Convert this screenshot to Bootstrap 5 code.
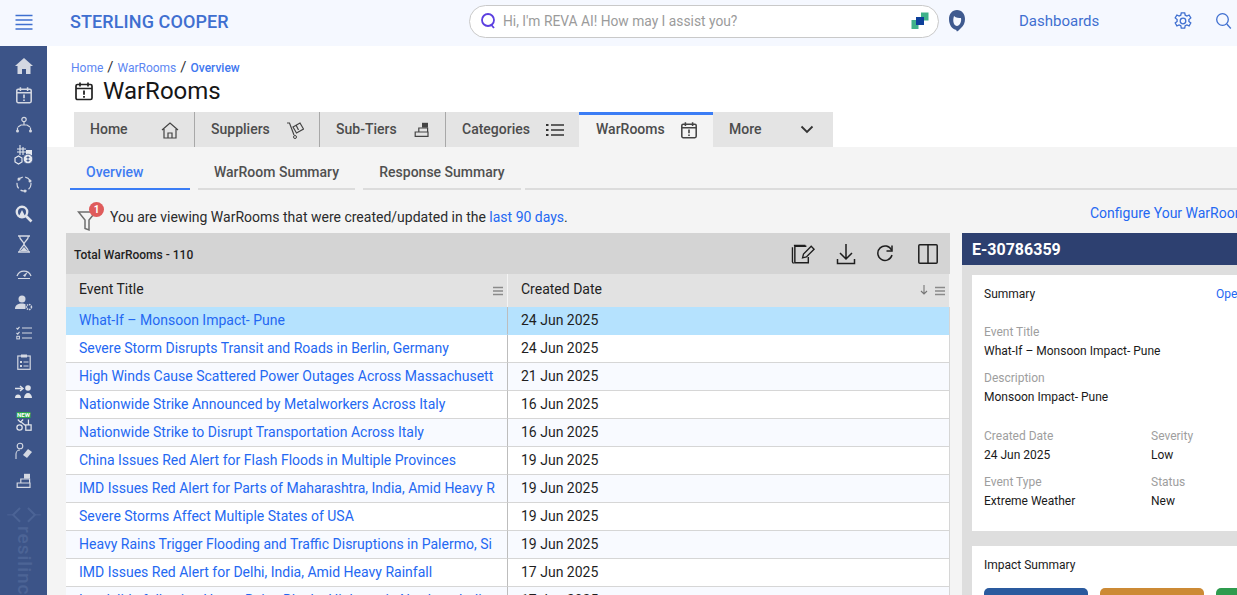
<!DOCTYPE html>
<html lang="en">
<head>
    <meta charset="UTF-8">
    <title>WarRooms</title>
    <link href="https://cdn.jsdelivr.net/npm/bootstrap@5.3.0/dist/css/bootstrap.min.css" rel="stylesheet">
    <style>
        html, body { height: 595px; overflow: hidden; }
        body { font-family: Roboto, "Liberation Sans", sans-serif; background: #f4f4f4; color: #1a1a1a; }
        a { text-decoration: none; color: #2468f2; }

        .app-top { height: 46px; background: #f5f8ff; width: 1237px; padding-bottom: 4px; }
        .burger { width: 47px; flex: none; padding-top: 2px; }
        .brand-name { width: 422px; padding-left: 23px; flex: none; font-size: 18px; font-weight: 500; color: #3f6fd0; letter-spacing: .1px; }
        .reva-box { width: 470px; height: 33px; flex: none; border: 1px solid #c9c9c9; border-radius: 17px; background: #fff; padding: 0 9px 0 10px; }
        .reva-text { font-size: 13.8px; color: #9b9b9b; margin-left: -2px; }
        .dash-link { font-size: 15px; color: #3f6fd0; margin-left: 52px; width: 154px; }

        .side-bar { width: 47px; height: 549px; flex: none; background: #3c5488; padding-top: 5px; overflow: hidden; }
        .side-item { height: 30.1px; }
        .side-logo { margin-top: 10px; }
        .side-mark { writing-mode: vertical-rl; font-size: 19px; font-weight: 500; color: #4c6496; margin-top: 2px; letter-spacing: 1px; }

        .page-main { width: 1190px; flex: none; overflow: hidden; }
        .page-head { background: #fff; height: 101px; padding: 14px 0 0 24px; }
        .crumbs { font-size: 12px; line-height: 14px; color: #333; }
        .crumbs a { color: #5c86f2; }
        .crumbs b { font-weight: 500; color: #3f78f0; }
        .crumbs i { font-style: normal; font-size: 15px; margin: 0 1px; }
        .title-row { margin: 2px 0 0 3px; }
        .title-row svg { margin-right: 9px; }
        .page-title { font-size: 24px; line-height: 28px; font-weight: 400; color: #161616; margin: 0; }
        .main-tabs { margin-top: 7px; margin-left: 3px; height: 35px; }
        .main-tab { height: 35px; background: #e4e4e4; color: #4c4c4c; font-size: 14px; font-weight: 500; padding: 0 15px 0 16px; border-right: 1px solid #a8a8a8; flex: none; }
        .main-tab.on { background: #f4f4f4; border-top: 3px solid #3b7df5; border-right: 0; padding: 0 15px 3px 17px; }
        .main-tab.tail { border-right: 0; }

        .sub-tabs { height: 43px; padding: 11px 0 0 23px; gap: 8px; }
        .sub-tab { height: 32px; border-bottom: 2px solid #dcdcdc; font-size: 14px; font-weight: 500; color: #505050; text-align: center; padding-top: 4px; flex: none; }
        .sub-tab.on { color: #3f7cf2; border-bottom-color: #3b7df5; }
        .sub-tab.rest { margin-left: -4px; flex-grow: 1; }
        .notice-row { height: 43px; padding: 12px 0 0 30px; font-size: 14px; color: #2b2b2b; width: 1190px; }
        .filter-wrap { position: relative; width: 26px; height: 26px; margin-right: 7px; flex: none; }
        .filter-count { position: absolute; top: -3px; right: -1px; width: 15px; height: 15px; border-radius: 50%; background: #df5b5b; color: #fff; font-size: 10px; font-weight: 700; line-height: 15px; text-align: center; }
        .config-link { margin-left: auto; font-size: 14px; white-space: nowrap; margin-top: -8px; margin-right: -10px; }

        .work-row { padding-left: 19px; gap: 12px; width: 1300px; }
        .grid-wrap { width: 884px; flex: none; }
        .grid-bar { height: 41px; background: #d4d4d4; padding: 0 12px 0 8px; font-size: 12px; font-weight: 500; color: #1f1f1f; }
        .grid-bar > span { padding-top: 2px; }
        .grid-tools { gap: 20px; }
        .war-grid { width: 884px; table-layout: fixed; margin: 0; font-size: 14px; border-collapse: separate; border-spacing: 0; }
        .war-grid th { height: 33px; background: #e2e2e2; font-weight: 400; font-size: 14px; color: #222; padding: 0 5px 2px 13px; position: relative; border-right: 1px solid #f4f4f4; }
        .war-grid td { height: 28px; padding: 0 13px; white-space: nowrap; overflow: hidden; background: #fff; border-bottom: 1px solid #d6d6d6; color: #1f1f1f; }
        .war-grid td:first-child { border-right: 1px solid #bdbdbd; }
        .war-grid td:last-child { border-right: 1px solid #d6d6d6; }
        .war-grid tr.alt td { background: #f8faff; }
        .war-grid tr.picked td { background: #b5e2fe; border-bottom-color: #b5e2fe; }
        .th-menu { position: absolute; right: 3px; top: 12px; }
        .th-sort { position: absolute; right: 20px; top: 10px; }

        .detail-wrap { width: 330px; flex: none; background: #dedede; height: 362px; }
        .detail-head { height: 32px; background: #2d4070; color: #fff; font-size: 16px; font-weight: 700; padding: 0 10px; line-height: 34px; }
        .detail-card { background: #fff; margin: 10px 0 15px 10px; padding: 10px 12px 12px; font-size: 12px; color: #1a1a1a; }
        .detail-card a { font-size: 12px; }
        .detail-card.top-card { height: 256px; }
        .sum-title { width: 232px; flex: none; }
        .fld-label { color: #9e9e9e; line-height: 14px; }
        .fld-value { line-height: 14px; margin-top: 5px; }
        .fld-col { width: 167px; flex: none; }
        .tile-row { gap: 12px; margin-top: 14px; }
        .impact-tile { width: 104px; height: 40px; border-radius: 5px; flex: none; }
    </style>
</head>
<body>

<svg width="0" height="0" class="position-absolute">
    <symbol id="cal-alert" viewBox="0 0 20 20">
        <rect x="2" y="3.5" width="16" height="15" rx="1.5" fill="none" stroke="currentColor" stroke-width="1.7"/>
        <path d="M2 7.5h16M6 1.5v4M14 1.5v4" fill="none" stroke="currentColor" stroke-width="1.7"/>
        <path d="M10 9.5v4.2M10 14.900v1.800" fill="none" stroke="currentColor" stroke-width="1.8"/>
    </symbol>
    <symbol id="stairs" viewBox="0 0 20 20">
        <rect x="10" y="1" width="7.500" height="6" fill="currentColor"/>
        <path d="M6 7.500h11v5H6zM1.500 12.500h16v5.500h-16z" fill="none" stroke="currentColor" stroke-width="1.500"/>
    </symbol>
    <symbol id="lines-3" viewBox="0 0 12 10">
        <path d="M1 1.500h10M1 5h10M1 8.500h10" stroke="#8a8a8a" stroke-width="1.400"/>
    </symbol>
</svg>

<div class="app-top d-flex align-items-center">
    <div class="burger d-flex justify-content-center">
        <svg width="20" height="16" viewBox="0 0 20 16"><path d="M1.500 1.500h17M1.500 6h17M1.500 10.500h17M1.500 15h17" stroke="#3f6fd0" stroke-width="1.400"/></svg>
    </div>
    <div class="brand-name">STERLING COOPER</div>
    <div class="reva-box d-flex align-items-center">
        <svg width="17" height="18" viewBox="0 0 17 18" class="me-2"><circle cx="8" cy="8" r="6" fill="none" stroke="#5b3fe0" stroke-width="1.800"/><path d="M11 12.500l3 3.500" stroke="#5b3fe0" stroke-width="1.800"/></svg>
        <span class="reva-text flex-grow-1">Hi, I'm REVA AI! How may I assist you?</span>
        <svg width="18" height="18" viewBox="0 0 18 18"><rect x="0.500" y="8" width="7" height="9" fill="#3fb28a"/><rect x="10" y="0.500" width="7.500" height="8" fill="#3fb28a"/><rect x="5" y="5" width="8" height="8" fill="#0d3f9a"/></svg>
    </div>
    <svg width="20" height="24" viewBox="0 0 20 24" class="ms-2 flex-none"><path d="M10 1c5 0 8 4 8 9 0 4-1.500 7-4 9l-3 3c-1 .6-2 0-1.500-1C5 20 2 16 2 10c0-5 3-9 8-9z" fill="#3f5a8f"/><path d="M7 7c2 2 5 2 7 2 .8 4-1.500 8-4 8s-5-4-3-10z" fill="#f5f8ff"/></svg>
    <a class="dash-link" href="#">Dashboards</a>
    <svg width="20" height="20" viewBox="0 0 20 20" class="flex-none"><circle cx="10" cy="10" r="2.800" fill="none" stroke="#3f6fd0" stroke-width="1.300"/><path d="M8.300 1.800h3.400l.5 2.400 1.700.8 2.200-1 1.700 2.900-1.900 1.600v1.900l1.900 1.600-1.700 2.900-2.200-1-1.700.8-.5 2.400H8.300l-.5-2.400-1.700-.8-2.200 1-1.700-2.900 1.900-1.600V8.500L2.200 6.900l1.700-2.900 2.200 1 1.700-.8z" fill="none" stroke="#3f6fd0" stroke-width="1.300"/></svg>
    <svg width="18" height="18" viewBox="0 0 18 18" class="flex-none" style="margin-left:22px"><circle cx="7.500" cy="7.500" r="5.800" fill="none" stroke="#3f6fd0" stroke-width="1.300"/><path d="M11.800 12l4 4.500" stroke="#3f6fd0" stroke-width="1.300"/></svg>
</div>

<div class="d-flex">
    <div class="side-bar d-flex flex-column align-items-center">
        <div class="side-item d-flex align-items-center"><svg width="18" height="16" viewBox="0 0 18 16"><path d="M9 0L0 8h2.500v8H7v-5h4v5h4.500V8H18z" fill="#d4d8e2"/></svg></div>
        <div class="side-item d-flex align-items-center"><svg width="18" height="18" style="color:#d4d8e2"><use href="#cal-alert"/></svg></div>
        <div class="side-item d-flex align-items-center"><svg width="18" height="18" viewBox="0 0 18 18"><circle cx="9" cy="3.500" r="2.200" fill="none" stroke="#d4d8e2" stroke-width="1.200"/><path d="M9 6v3M3 11l3-2h6l3 2M2.500 11.500v3M15.500 11.500v3" fill="none" stroke="#d4d8e2" stroke-width="1.200"/><circle cx="2.500" cy="15" r="1.500" fill="#d4d8e2"/><circle cx="15.500" cy="15" r="1.500" fill="#d4d8e2"/></svg></div>
        <div class="side-item d-flex align-items-center"><svg width="20" height="20" viewBox="0 0 20 20"><path d="M6 0v10M9 2v8M3 4h9M3 7h9" stroke="#e6e9f0" stroke-width="1.100"/><path d="M12 5h6v5h-6z" fill="#e6e9f0"/><path d="M1 13l3.500-2 3.500 2v4l-3.500 2L1 17z" fill="none" stroke="#e6e9f0" stroke-width="1.200"/><circle cx="14" cy="14" r="4.800" fill="#e6e9f0" stroke="#3c5488" stroke-width=".8"/><path d="M14 11v6M12.500 12.500h3M12.500 15.500h3" stroke="#3c5488" stroke-width=".9"/></svg></div>
        <div class="side-item d-flex align-items-center"><svg width="18" height="18" viewBox="0 0 18 18"><circle cx="9" cy="9" r="7" fill="none" stroke="#d4d8e2" stroke-width="1.200" stroke-dasharray="6 2.500"/><circle cx="4" cy="4" r="1.500" fill="#d4d8e2"/><circle cx="15" cy="6" r="1.500" fill="#d4d8e2"/><circle cx="10" cy="16" r="1.500" fill="#d4d8e2"/></svg></div>
        <div class="side-item d-flex align-items-center"><svg width="18" height="18" viewBox="0 0 18 18"><circle cx="7" cy="7" r="5.200" fill="none" stroke="#e0e3ea" stroke-width="2.400"/><path d="M11 11l5.500 5.500" stroke="#e0e3ea" stroke-width="2.600"/><path d="M7 5l3 6H4z" fill="#e0e3ea"/></svg></div>
        <div class="side-item d-flex align-items-center"><svg width="14" height="18" viewBox="0 0 14 18"><path d="M1 1h12M1 17h12M2.500 1c0 4 4.500 5.500 4.500 8 0-2.500 4.500-4 4.500-8M2.500 17c0-4 4.500-5.500 4.500-8 0 2.500 4.500 4 4.500 8z" fill="none" stroke="#d4d8e2" stroke-width="1.300"/><path d="M3.500 16L7 12l3.500 4z" fill="#d4d8e2"/></svg></div>
        <div class="side-item d-flex align-items-center"><svg width="18" height="14" viewBox="0 0 18 14"><path d="M2 10a7.500 7.500 0 0 1 14 0" fill="none" stroke="#d4d8e2" stroke-width="1.300"/><path d="M8 9.500l5-4-3 5.500z" fill="#d4d8e2"/><path d="M3 12.500h12" stroke="#d4d8e2"/></svg></div>
        <div class="side-item d-flex align-items-center"><svg width="18" height="16" viewBox="0 0 18 16"><circle cx="7" cy="4" r="3.500" fill="#d4d8e2"/><path d="M0 14c0-4 3-5.500 7-5.500 1.500 0 2.500.2 3.500.7V14z" fill="#d4d8e2"/><circle cx="14" cy="12" r="2.500" fill="none" stroke="#d4d8e2" stroke-width="1.500" stroke-dasharray="1.500 .8"/></svg></div>
        <div class="side-item d-flex align-items-center"><svg width="16" height="14" viewBox="0 0 16 14"><path d="M.5 2l1.200 1.200L3.500.8M.5 7l1.200 1.200L3.500 5.800M6 2h10M6 7h10M6 12h10" fill="none" stroke="#d4d8e2" stroke-width="1.100"/><rect x=".8" y="10.300" width="2.600" height="2.600" fill="none" stroke="#d4d8e2"/></svg></div>
        <div class="side-item d-flex align-items-center"><svg width="14" height="16" viewBox="0 0 14 16"><rect x=".8" y="2" width="12.400" height="13.300" fill="none" stroke="#d4d8e2" stroke-width="1.200"/><rect x="4" y=".5" width="6" height="3" fill="#d4d8e2"/><path d="M3 7h2v2H3zM3 11h2v2H3z" fill="#d4d8e2"/><path d="M6.500 8h5M6.500 12h5" stroke="#d4d8e2"/></svg></div>
        <div class="side-item d-flex align-items-center"><svg width="18" height="14" viewBox="0 0 18 14"><path d="M0 3.500h8M5 1l3 2.500L5 6" fill="none" stroke="#e0e3ea" stroke-width="1.400"/><circle cx="13" cy="3" r="2.800" fill="#e0e3ea"/><path d="M9 13c0-3 2-5 4-5s4 2 4 5zM0 13c0-2 1-3.500 3-3.500S6 11 6 13z" fill="#e0e3ea"/></svg></div>
        <div class="side-item d-flex align-items-center position-relative">
            <svg width="16" height="16" viewBox="0 0 18 18" class="mt-1"><circle cx="4" cy="13" r="3" fill="none" stroke="#e0e3ea" stroke-width="1.400"/><rect x="11" y="10" width="6" height="6" fill="none" stroke="#e0e3ea" stroke-width="1.400"/><path d="M2 4l3 3 3-3M6 7l5 4M14 4v6" fill="none" stroke="#e0e3ea" stroke-width="1.400"/></svg>
            <span class="position-absolute start-50 translate-middle-x" style="top:5px;background:#2ea84f;color:#fff;font-size:6px;font-weight:700;line-height:6px;padding:0 1px;">NEW</span>
        </div>
        <div class="side-item d-flex align-items-center"><svg width="18" height="18" viewBox="0 0 18 18"><circle cx="5" cy="4" r="2.800" fill="none" stroke="#d4d8e2" stroke-width="1.100"/><path d="M1 17v-5c0-2 1.500-4 4-4" fill="none" stroke="#d4d8e2" stroke-width="1.100"/><path d="M8 13l5-6 4 3-5 6z" fill="#d4d8e2"/></svg></div>
        <div class="side-item d-flex align-items-center"><svg width="16" height="16" style="color:#d4d8e2"><use href="#stairs"/></svg></div>
        <svg class="side-logo flex-none" width="34" height="18" viewBox="0 0 34 18"><path d="M13 2L6 9l7 7M21 2l7 7-7 7" fill="none" stroke="#4c6496" stroke-width="2"/><path d="M0 9h6M28 9h6" stroke="#4c6496"/></svg>
        <div class="side-mark">resilinc</div>
    </div>

    <div class="page-main">
        <div class="page-head">
            <div class="crumbs"><a href="#">Home</a> <i>/</i> <a href="#">WarRooms</a> <i>/</i> <a href="#"><b>Overview</b></a></div>
            <div class="title-row d-flex align-items-center">
                <svg width="20" height="20" style="color:#222"><use href="#cal-alert"/></svg>
                <h1 class="page-title">WarRooms</h1>
            </div>
            <div class="main-tabs d-flex">
                <div class="main-tab d-flex align-items-center justify-content-between" style="width:121px">Home
                    <svg width="18" height="18" viewBox="0 0 18 18"><path d="M1 9l8-7 8 7M3 8v9h12V8M7 17v-5h4v5" fill="none" stroke="#444" stroke-width="1.200"/></svg></div>
                <div class="main-tab d-flex align-items-center justify-content-between" style="width:125px">Suppliers
                    <svg width="18" height="18" viewBox="0 0 18 18"><path d="M1 2h2.500L8 14" fill="none" stroke="#444" stroke-width="1.200"/><path d="M7 6l7-4 3.500 6-7 4zM10 4l2.500 5" fill="none" stroke="#444" stroke-width="1.200"/><circle cx="9" cy="16" r="1.500" fill="none" stroke="#444"/></svg></div>
                <div class="main-tab d-flex align-items-center justify-content-between" style="width:126px">Sub-Tiers
                    <svg width="16" height="16" style="color:#444"><use href="#stairs"/></svg></div>
                <div class="main-tab tail d-flex align-items-center justify-content-between" style="width:133px">Categories
                    <svg width="18" height="14" viewBox="0 0 18 14"><path d="M5 2h13M5 7h13M5 12h13" stroke="#333" stroke-width="1.600"/><path d="M0 2h2.500M0 7h2.500M0 12h2.500" stroke="#333" stroke-width="2.200"/></svg></div>
                <div class="main-tab on d-flex align-items-center justify-content-between" style="width:134px">WarRooms
                    <svg width="18" height="18" style="color:#444"><use href="#cal-alert"/></svg></div>
                <div class="main-tab tail d-flex align-items-center justify-content-between" style="width:120px">More
                    <svg width="14" height="9" viewBox="0 0 14 9" class="me-1"><path d="M1.500 1.500L7 7l5.500-5.500" fill="none" stroke="#333" stroke-width="1.800"/></svg></div>
            </div>
        </div>

        <div class="sub-tabs d-flex">
            <div class="sub-tab on" style="width:120px;text-align:left;padding-left:16px">Overview</div>
            <div class="sub-tab" style="width:157px">WarRoom Summary</div>
            <div class="sub-tab" style="width:158px">Response Summary</div>
            <div class="sub-tab rest"></div>
        </div>

        <div class="notice-row d-flex align-items-center">
            <div class="filter-wrap">
                <svg width="22" height="24" viewBox="0 0 22 24" class="mt-1"><path d="M1.500 3h17l-6.500 8v10l-4-1.500V11z" fill="none" stroke="#6e6e6e" stroke-width="1.500"/></svg>
                <span class="filter-count">1</span>
            </div>
            <span>You are viewing WarRooms that were created/updated in the <a href="#">last 90 days</a>.</span>
            <a href="#" class="config-link">Configure Your WarRoom</a>
        </div>

        <div class="work-row d-flex align-items-start">
            <div class="grid-wrap">
                <div class="grid-bar d-flex align-items-center justify-content-between">
                    <span>Total WarRooms - 110</span>
                    <div class="grid-tools d-flex align-items-center">
                        <svg width="25" height="22" viewBox="0 0 26 22"><path d="M3 2h12M1.500 4v15c0 1 .5 1.500 1.500 1.500" fill="none" stroke="#1e1e1e" stroke-width="1.400"/><path d="M16 3H4v17h14v-6" fill="none" stroke="#1e1e1e" stroke-width="1.500"/><path d="M12 15l1-4 8-8 3 3-8 8z" fill="none" stroke="#1e1e1e" stroke-width="1.400"/></svg>
                        <svg width="20" height="22" viewBox="0 0 20 22"><path d="M10 1v15M4 10l6 6 6-6M1.500 16v4.500h17V16" fill="none" stroke="#1e1e1e" stroke-width="1.500"/></svg>
                        <svg width="18" height="20" viewBox="0 0 18 20"><path d="M15.500 6A7.200 7.200 0 1 0 16 11" fill="none" stroke="#1e1e1e" stroke-width="1.500"/><path d="M16 1.500V7h-5.500" fill="none" stroke="#1e1e1e" stroke-width="1.500"/></svg>
                        <svg width="20" height="20" viewBox="0 0 20 20" class="ms-1"><rect x=".8" y=".8" width="18.400" height="18.400" rx="1" fill="none" stroke="#1e1e1e" stroke-width="1.500"/><path d="M10 1v18" stroke="#1e1e1e" stroke-width="1.500"/></svg>
                    </div>
                </div>
                <table class="war-grid">
                    <colgroup><col style="width:442px"><col></colgroup>
                    <thead>
                        <tr>
                            <th>Event Title<svg class="th-menu" width="12" height="10"><use href="#lines-3"/></svg></th>
                            <th>Created Date
                                <svg class="th-sort" width="10" height="12" viewBox="0 0 10 12"><path d="M5 1v9M2 7l3 3 3-3" fill="none" stroke="#777" stroke-width="1.100"/></svg>
                                <svg class="th-menu" width="12" height="10"><use href="#lines-3"/></svg></th>
                        </tr>
                    </thead>
                    <tbody>
                        <tr class="picked"><td><a href="#">What-If – Monsoon Impact- Pune</a></td><td>24 Jun 2025</td></tr>
                        <tr><td><a href="#">Severe Storm Disrupts Transit and Roads in Berlin, Germany</a></td><td>24 Jun 2025</td></tr>
                        <tr class="alt"><td><a href="#">High Winds Cause Scattered Power Outages Across Massachusett</a></td><td>21 Jun 2025</td></tr>
                        <tr><td><a href="#">Nationwide Strike Announced by Metalworkers Across Italy</a></td><td>16 Jun 2025</td></tr>
                        <tr class="alt"><td><a href="#">Nationwide Strike to Disrupt Transportation Across Italy</a></td><td>16 Jun 2025</td></tr>
                        <tr><td><a href="#">China Issues Red Alert for Flash Floods in Multiple Provinces</a></td><td>19 Jun 2025</td></tr>
                        <tr class="alt"><td><a href="#">IMD Issues Red Alert for Parts of Maharashtra, India, Amid Heavy R</a></td><td>19 Jun 2025</td></tr>
                        <tr><td><a href="#">Severe Storms Affect Multiple States of USA</a></td><td>19 Jun 2025</td></tr>
                        <tr class="alt"><td><a href="#">Heavy Rains Trigger Flooding and Traffic Disruptions in Palermo, Si</a></td><td>19 Jun 2025</td></tr>
                        <tr><td><a href="#">IMD Issues Red Alert for Delhi, India, Amid Heavy Rainfall</a></td><td>17 Jun 2025</td></tr>
                        <tr class="alt"><td><a href="#">Landslide following Heavy Rains Blocks Highway in Northern India</a></td><td>17 Jun 2025</td></tr>
                    </tbody>
                </table>
            </div>

            <div class="detail-wrap">
                <div class="detail-head">E-30786359</div>
                <div class="detail-card top-card">
                    <div class="d-flex"><span class="sum-title">Summary</span><a href="#">Ope</a></div>
                    <div class="fld-label" style="margin-top:22px">Event Title</div>
                    <div class="fld-value">What-If – Monsoon Impact- Pune</div>
                    <div class="fld-label" style="margin-top:13px">Description</div>
                    <div class="fld-value">Monsoon Impact- Pune</div>
                    <div class="d-flex" style="margin-top:25px">
                        <div class="fld-col"><div class="fld-label">Created Date</div><div class="fld-value">24 Jun 2025</div></div>
                        <div class="fld-col"><div class="fld-label">Severity</div><div class="fld-value">Low</div></div>
                    </div>
                    <div class="d-flex" style="margin-top:13px">
                        <div class="fld-col"><div class="fld-label">Event Type</div><div class="fld-value">Extreme Weather</div></div>
                        <div class="fld-col"><div class="fld-label">Status</div><div class="fld-value">New</div></div>
                    </div>
                </div>
                <div class="detail-card">
                    <div>Impact Summary</div>
                    <div class="tile-row d-flex">
                        <div class="impact-tile" style="background:#2a5a9e"></div>
                        <div class="impact-tile" style="background:#cc8a35"></div>
                        <div class="impact-tile" style="background:#2e9b4e"></div>
                    </div>
                </div>
            </div>
        </div>
    </div>
</div>

<script src="https://cdn.jsdelivr.net/npm/bootstrap@5.3.0/dist/js/bootstrap.bundle.min.js"></script>
</body>
</html>
